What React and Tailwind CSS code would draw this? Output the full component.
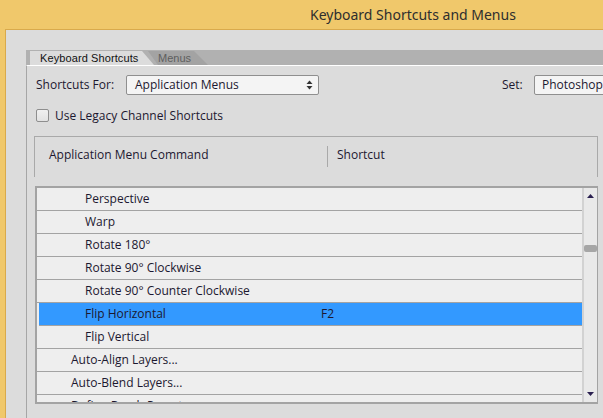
import React from "react";

const rows = [
  { name: "Perspective", indent: true },
  { name: "Warp", indent: true },
  { name: "Rotate 180°", indent: true },
  { name: "Rotate 90° Clockwise", indent: true },
  { name: "Rotate 90° Counter Clockwise", indent: true },
  { name: "Flip Horizontal", indent: true, key: "F2", selected: true },
  { name: "Flip Vertical", indent: true },
  { name: "Auto-Align Layers...", indent: false },
  { name: "Auto-Blend Layers...", indent: false },
  { name: "Define Brush Preset...", indent: false },
];

const Arrows = () => (
  <svg width="7" height="10" viewBox="0 0 7 10">
    <path d="M3.5 0.5 L6.5 4 H0.5 Z" fill="#333" />
    <path d="M3.5 9.5 L6.5 6 H0.5 Z" fill="#333" />
  </svg>
);

const App = () => {
  return (
    <div className="w-[603px] h-[418px] bg-[#f0c86b] flex flex-col overflow-hidden text-[#1c1830] font-['Open_Sans',sans-serif]">
      {/* title bar */}
      <div className="h-[29px] shrink-0 pl-[310px] flex items-center text-[14px] text-[#2e2e2e] font-['Noto_Sans',sans-serif]">
        Keyboard Shortcuts and Menus
      </div>

      {/* window body */}
      <div className="flex-1 ml-[5px] bg-[#dcdcdc] border-l border-t border-[#d9aa4c] pt-[20px] pl-[20px] flex flex-col min-h-0 overflow-hidden">
        {/* tab strip */}
        <div className="h-[15px] shrink-0 bg-[#b1b1b1] flex items-end pl-[4px]">
          <div className="h-[14px] w-[124px] shrink-0 bg-[#dcdcdc] [clip-path:polygon(0_0,112px_0,124px_100%,0_100%)] pl-[10px] text-[11px] leading-[14px] tracking-[0.1px] text-[#111] font-['Liberation_Sans',sans-serif]">
            Keyboard Shortcuts
          </div>
          <div className="h-[14px] w-[62px] shrink-0 -ml-[6px] bg-[#a3a3a3] [clip-path:polygon(0_0,46px_0,60px_100%,10px_100%)] pl-[10px] text-[11px] leading-[14px] text-[#5e5e5e] font-['Liberation_Sans',sans-serif]">
            Menus
          </div>
        </div>

        {/* panel */}
        <div className="flex-1 border-l border-[#a6a6a6] border-t-white border-t pl-[9px] pt-[9px] flex flex-col text-[12px] overflow-hidden">
          <div className="h-[20px] flex items-center">
            <span className="w-[90px] shrink-0">Shortcuts For:</span>
            <div className="w-[193px] h-[20px] shrink-0 bg-[#f4f4f4] border border-[#8f8f8f] rounded-[2px] flex items-center pl-[8px] pr-[5px]">
              <span className="flex-1">Application Menus</span>
              <Arrows />
            </div>
            <span className="ml-[183px] w-[32px] shrink-0">Set:</span>
            <div className="w-[110px] h-[20px] shrink-0 bg-[#f4f4f4] border border-[#8f8f8f] rounded-[2px] flex items-center pl-[7px] whitespace-nowrap">
              Photoshop Defaults
            </div>
          </div>

          <div className="mt-[14px] h-[13px] flex items-center">
            <div className="w-[13px] h-[13px] shrink-0 border border-[#8e8e8e] rounded-[2px] bg-gradient-to-b from-[#f0f0f0] to-[#e2e2e2]" />
            <span className="ml-[6px]">Use Legacy Channel Shortcuts</span>
          </div>

          {/* header */}
          <div className="mt-[14px] -ml-[2px] w-[564px] h-[41px] shrink-0 border-t border-l border-r border-[#a9a9a9] flex items-start pt-[9px]">
            <span className="pl-[14px] w-[292px] leading-[18px]">Application Menu Command</span>
            <div className="w-px h-[21px] bg-[#a9a9a9]" />
            <span className="pl-[9px] leading-[18px]">Shortcut</span>
          </div>

          {/* list */}
          <div className="mt-[9px] -ml-[1px] w-[563px] h-[218px] shrink-0 border-2 border-r border-[#a3a3a3] bg-[#eeeeee] flex overflow-hidden">
            <div className="flex-1 flex flex-col">
              {rows.map((r) => (
                <div
                  key={r.name}
                  className={`h-[23px] shrink-0 border-b border-[#a3a3a3] flex items-center ${
                    r.selected ? "bg-[#3399ff] ml-[2px]" : ""
                  }`}
                >
                  <span
                    className={`${
                      r.indent ? (r.selected ? "pl-[46px] w-[282px]" : "pl-[48px] w-[284px]") : "pl-[34px] w-[284px]"
                    } shrink-0`}
                  >
                    {r.name}
                  </span>
                  <span>{r.key}</span>
                </div>
              ))}
            </div>
            {/* scrollbar */}
            <div className="w-[15px] shrink-0 bg-[#e9e9e9] border-l-2 border-[#d2d2d2] flex flex-col items-center">
              <svg width="7" height="4" viewBox="0 0 7 4" className="mt-[6px]">
                <path d="M3.5 0 L7 4 H0 Z" fill="#2a2050" />
              </svg>
              <div className="mt-[47px] w-[13px] h-[7px] bg-[#a6a6a6] rounded-[2px]" />
              <div className="flex-1" />
              <svg width="7" height="4" viewBox="0 0 7 4" className="mb-[6px]">
                <path d="M3.5 4 L7 0 H0 Z" fill="#2a2050" />
              </svg>
            </div>
          </div>
        </div>
      </div>
    </div>
  );
};

export default App;
